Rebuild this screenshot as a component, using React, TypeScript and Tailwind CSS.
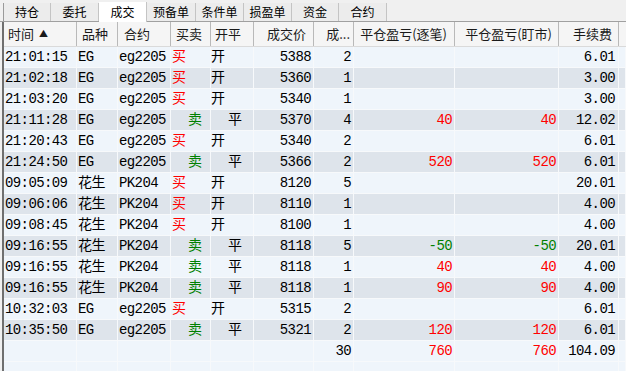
const tabs = ['持仓', '委托', '成交', '预备单', '条件单', '损盈单', '资金', '合约'];
const tabWidths = ['w-[48px]', 'w-[48px]', 'w-[48px]', 'w-[49px]', 'w-[48px]', 'w-[48px]', 'w-[47px]', 'w-[48px]'];

type Trade = {
  time: string;
  kind: string;
  code: string;
  side: '买' | '卖';
  open: '开' | '平';
  price: string;
  qty: string;
  pnl: string;
  mtm: string;
  fee: string;
};

const trades: Trade[] = [
  { time: '21:01:15', kind: 'EG', code: 'eg2205', side: '买', open: '开', price: '5388', qty: '2', pnl: '', mtm: '', fee: '6.01' },
  { time: '21:02:18', kind: 'EG', code: 'eg2205', side: '买', open: '开', price: '5360', qty: '1', pnl: '', mtm: '', fee: '3.00' },
  { time: '21:03:20', kind: 'EG', code: 'eg2205', side: '买', open: '开', price: '5340', qty: '1', pnl: '', mtm: '', fee: '3.00' },
  { time: '21:11:28', kind: 'EG', code: 'eg2205', side: '卖', open: '平', price: '5370', qty: '4', pnl: '40', mtm: '40', fee: '12.02' },
  { time: '21:20:43', kind: 'EG', code: 'eg2205', side: '买', open: '开', price: '5340', qty: '2', pnl: '', mtm: '', fee: '6.01' },
  { time: '21:24:50', kind: 'EG', code: 'eg2205', side: '卖', open: '平', price: '5366', qty: '2', pnl: '520', mtm: '520', fee: '6.01' },
  { time: '09:05:09', kind: '花生', code: 'PK204', side: '买', open: '开', price: '8120', qty: '5', pnl: '', mtm: '', fee: '20.01' },
  { time: '09:06:06', kind: '花生', code: 'PK204', side: '买', open: '开', price: '8110', qty: '1', pnl: '', mtm: '', fee: '4.00' },
  { time: '09:08:45', kind: '花生', code: 'PK204', side: '买', open: '开', price: '8100', qty: '1', pnl: '', mtm: '', fee: '4.00' },
  { time: '09:16:55', kind: '花生', code: 'PK204', side: '卖', open: '平', price: '8118', qty: '5', pnl: '-50', mtm: '-50', fee: '20.01' },
  { time: '09:16:55', kind: '花生', code: 'PK204', side: '卖', open: '平', price: '8118', qty: '1', pnl: '40', mtm: '40', fee: '4.00' },
  { time: '09:16:55', kind: '花生', code: 'PK204', side: '卖', open: '平', price: '8118', qty: '1', pnl: '90', mtm: '90', fee: '4.00' },
  { time: '10:32:03', kind: 'EG', code: 'eg2205', side: '买', open: '开', price: '5315', qty: '2', pnl: '', mtm: '', fee: '6.01' },
  { time: '10:35:50', kind: 'EG', code: 'eg2205', side: '卖', open: '平', price: '5321', qty: '2', pnl: '120', mtm: '120', fee: '6.01' },
];

const cols = 'grid grid-cols-[73px_41px_53px_40px_43px_60px_40px_101px_104px_60px_1fr]';
const cell = 'h-[21px] border-r border-b border-[#f7f9fb] flex items-center whitespace-nowrap overflow-hidden';
const head = 'h-[24px] border-r border-[#b9b9b9] flex items-center whitespace-nowrap overflow-hidden';

const pnlColor = (v: string) => (v.startsWith('-') ? 'text-[#008000]' : 'text-[#ff0000]');

const DataRow = ({ t, dark }: { t: Trade; dark: boolean }) => (
  <div className={`${cols} ${dark ? 'bg-[#dee4eb]' : 'bg-[#eff5fb]'}`}>
    <div className={`${cell} pl-[1px]`}>{t.time}</div>
    <div className={`${cell} pl-[1px]`}>{t.kind}</div>
    <div className={`${cell} pl-[1px]`}>{t.code}</div>
    <div
      className={`${cell} ${t.side === '买' ? 'pl-[1px] text-[#ff0000]' : 'pl-[17px] text-[#008000]'}`}
    >
      {t.side}
    </div>
    <div className={`${cell} ${t.open === '开' ? 'pl-[0px]' : 'pl-[17px]'}`}>{t.open}</div>
    <div className={`${cell} justify-end pr-[2px]`}>{t.price}</div>
    <div className={`${cell} justify-end pr-[2px]`}>{t.qty}</div>
    <div className={`${cell} justify-end pr-[2px] ${pnlColor(t.pnl)}`}>{t.pnl}</div>
    <div className={`${cell} justify-end pr-[2px] ${pnlColor(t.mtm)}`}>{t.mtm}</div>
    <div className={`${cell} justify-end pr-[3px]`}>{t.fee}</div>
    <div className={cell}></div>
  </div>
);

export default function App() {
  return (
    <div className="w-[626px] h-[371px] overflow-hidden bg-[#f0f0f0] text-black">
      {/* tab strip */}
      <div className="h-[22px] flex items-end pl-[3px] border-b border-[#a0a0a0] font-['Noto_Sans_CJK_SC',sans-serif] text-[12px]">
        {tabs.map((name, i) => (
          <div
            key={name}
            className={`${tabWidths[i]} flex items-center justify-center border-r border-[#c4c4c4] ${
              i === 0 ? 'border-l border-l-[#9a9a9a]' : ''
            } ${name === '成交' ? 'bg-white h-[20px] -mb-[1px]' : 'bg-[#ececec] h-[18px]'}`}
          >
            {name}
          </div>
        ))}
      </div>

      {/* trades grid */}
      <div className="ml-[2px] border-l-2 border-[#6f6f6f] h-[349px] overflow-hidden">
        <div
          className={`${cols} bg-[#f5f5f5] border-b border-[#dadada] font-['Noto_Sans_CJK_SC',sans-serif] text-[13px] text-[#1a1a1a]`}
        >
          <div className={`${head} pl-[4px] gap-[5px]`}>
            时间<span className="text-[9px]">▲</span>
          </div>
          <div className={`${head} pl-[5px]`}>品种</div>
          <div className={`${head} pl-[6px]`}>合约</div>
          <div className={`${head} pl-[5px]`}>买卖</div>
          <div className={`${head} pl-[4px]`}>开平</div>
          <div className={`${head} justify-end pr-[7px]`}>成交价</div>
          <div className={`${head} justify-end pr-[3px]`}>成...</div>
          <div className={`${head} justify-end pr-[7px]`}>平仓盈亏(逐笔)</div>
          <div className={`${head} justify-end pr-[6px]`}>平仓盈亏(盯市)</div>
          <div className={`${head} justify-end pr-[6px]`}>手续费</div>
          <div className="h-[24px]"></div>
        </div>

        <div className="font-['Liberation_Mono','Noto_Sans_CJK_SC',monospace] text-[14px] tracking-[-0.6px]">
          {trades.map((t, i) => (
            <DataRow key={i} t={t} dark={i % 2 === 1} />
          ))}

          <div className={`${cols} bg-[#eff5fb]`}>
            <div className={cell}></div>
            <div className={cell}></div>
            <div className={cell}></div>
            <div className={cell}></div>
            <div className={cell}></div>
            <div className={cell}></div>
            <div className={`${cell} justify-end pr-[2px]`}>30</div>
            <div className={`${cell} justify-end pr-[2px] text-[#ff0000]`}>760</div>
            <div className={`${cell} justify-end pr-[2px] text-[#ff0000]`}>760</div>
            <div className={`${cell} justify-end pr-[3px]`}>104.09</div>
            <div className={cell}></div>
          </div>
          <div className={`${cols} bg-[#eff5fb]`}>
            {Array.from({ length: 11 }).map((_, k) => (
              <div key={k} className={cell}></div>
            ))}
          </div>
        </div>
      </div>
    </div>
  );
}
